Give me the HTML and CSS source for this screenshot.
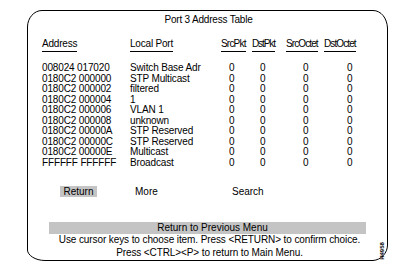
FILE: index.html
```html
<!DOCTYPE html>
<html>
<head>
<meta charset="utf-8">
<link rel="stylesheet" href="styles.css">
</head>
<body>
<div class="screen">
  <svg class="frame" width="417" height="274" viewBox="0 0 417 274">
    <path d="M42 10.5 H373 C381 10.5 387 18 387.5 28 V245 C387.5 253 381 260 373 260.5 H45 C35 260.5 27.5 255 27.5 250 V27 C27.5 18 34 10.5 42 10.5 Z" fill="none" stroke="#000" stroke-width="1"/>
  </svg>
  <div class="title">Port 3 Address Table</div>
  <div class="table">
    <div class="hd"><span>Address</span></div>
    <div class="hd"><span>Local Port</span></div>
    <div class="hd h3"><span>SrcPkt</span></div>
    <div class="hd h4"><span>DstPkt</span></div>
    <div class="hd h5"><span>SrcOctet</span></div>
    <div class="hd h6"><span>DstOctet</span></div>
  </div>
  <div class="table rows">
    <div>008024 017020</div><div>Switch Base Adr</div><div class="c1">0</div><div class="c2">0</div><div class="c3">0</div><div class="c4">0</div>
    <div>0180C2 000000</div><div>STP Multicast</div><div class="c1">0</div><div class="c2">0</div><div class="c3">0</div><div class="c4">0</div>
    <div>0180C2 000002</div><div>filtered</div><div class="c1">0</div><div class="c2">0</div><div class="c3">0</div><div class="c4">0</div>
    <div>0180C2 000004</div><div>1</div><div class="c1">0</div><div class="c2">0</div><div class="c3">0</div><div class="c4">0</div>
    <div>0180C2 000006</div><div>VLAN 1</div><div class="c1">0</div><div class="c2">0</div><div class="c3">0</div><div class="c4">0</div>
    <div>0180C2 000008</div><div>unknown</div><div class="c1">0</div><div class="c2">0</div><div class="c3">0</div><div class="c4">0</div>
    <div>0180C2 00000A</div><div>STP Reserved</div><div class="c1">0</div><div class="c2">0</div><div class="c3">0</div><div class="c4">0</div>
    <div>0180C2 00000C</div><div>STP Reserved</div><div class="c1">0</div><div class="c2">0</div><div class="c3">0</div><div class="c4">0</div>
    <div>0180C2 00000E</div><div>Multicast</div><div class="c1">0</div><div class="c2">0</div><div class="c3">0</div><div class="c4">0</div>
    <div>FFFFFF FFFFFF</div><div>Broadcast</div><div class="c1">0</div><div class="c2">0</div><div class="c3">0</div><div class="c4">0</div>
  </div>
  <div class="actions">
    <div><span class="sel">Return</span></div>
    <div>More</div>
    <div>Search</div>
  </div>
  <div class="bar">Return to Previous Menu</div>
  <div class="help">Use cursor keys to choose item. Press &lt;RETURN&gt; to confirm choice.</div>
  <div class="help">Press &lt;CTRL&gt;&lt;P&gt; to return to Main Menu.</div>
  <div class="fig">H4958</div>
</div>
</body>
</html>
```
FILE: styles.css
```css
html, body {
  margin: 0;
  padding: 0;
  background: #fff;
}
.screen {
  position: relative;
  width: 417px;
  height: 274px;
  overflow: hidden;
  font-family: "Liberation Sans", Arial, sans-serif;
  font-size: 10px;
  color: #000;
}
.frame {
  position: absolute;
  left: 0;
  top: 0;
}
.title {
  padding-top: 14px;
  line-height: 12px;
  text-align: center;
  letter-spacing: -0.2px;
}
.table {
  display: grid;
  grid-template-columns: 88px 91px 31px 34px 38px 36px;
  padding-left: 42px;
  margin-top: 12px;
  line-height: 12px;
  white-space: nowrap;
}
.hd span {
  display: inline-block;
  border-bottom: 1px solid #000;
  padding-bottom: 1px;
  letter-spacing: -0.2px;
}
.h3 span { letter-spacing: -0.8px; }
.h4 span { letter-spacing: -1.1px; }
.h5 span { letter-spacing: -0.9px; }
.h6 span { letter-spacing: -0.9px; }
.rows {
  margin-top: 11px;
  line-height: 10.5px;
  letter-spacing: -0.15px;
}
.c1, .c2 { padding-left: 8px; }
.c3 { padding-left: 17px; }
.c4 { padding-left: 23px; }
.actions {
  display: grid;
  grid-template-columns: 75px 97px auto;
  padding-left: 60px;
  margin-top: 18px;
  line-height: 11px;
}
.sel {
  display: inline-block;
  width: 37px;
  text-align: center;
  background: #c4c4c4;
}
.bar {
  margin: 25px 0 0 49px;
  width: 317px;
  height: 12px;
  line-height: 12px;
  background: #c4c4c4;
  text-align: center;
  padding-left: 10px;
  box-sizing: border-box;
}
.help {
  line-height: 12.5px;
  text-align: center;
  padding-left: 2px;
  letter-spacing: -0.1px;
}
.fig {
  position: absolute;
  left: 373px;
  top: 248px;
  font-size: 6px;
  font-weight: bold;
  line-height: 6px;
  transform: rotate(-90deg);
  transform-origin: center;
}
```
